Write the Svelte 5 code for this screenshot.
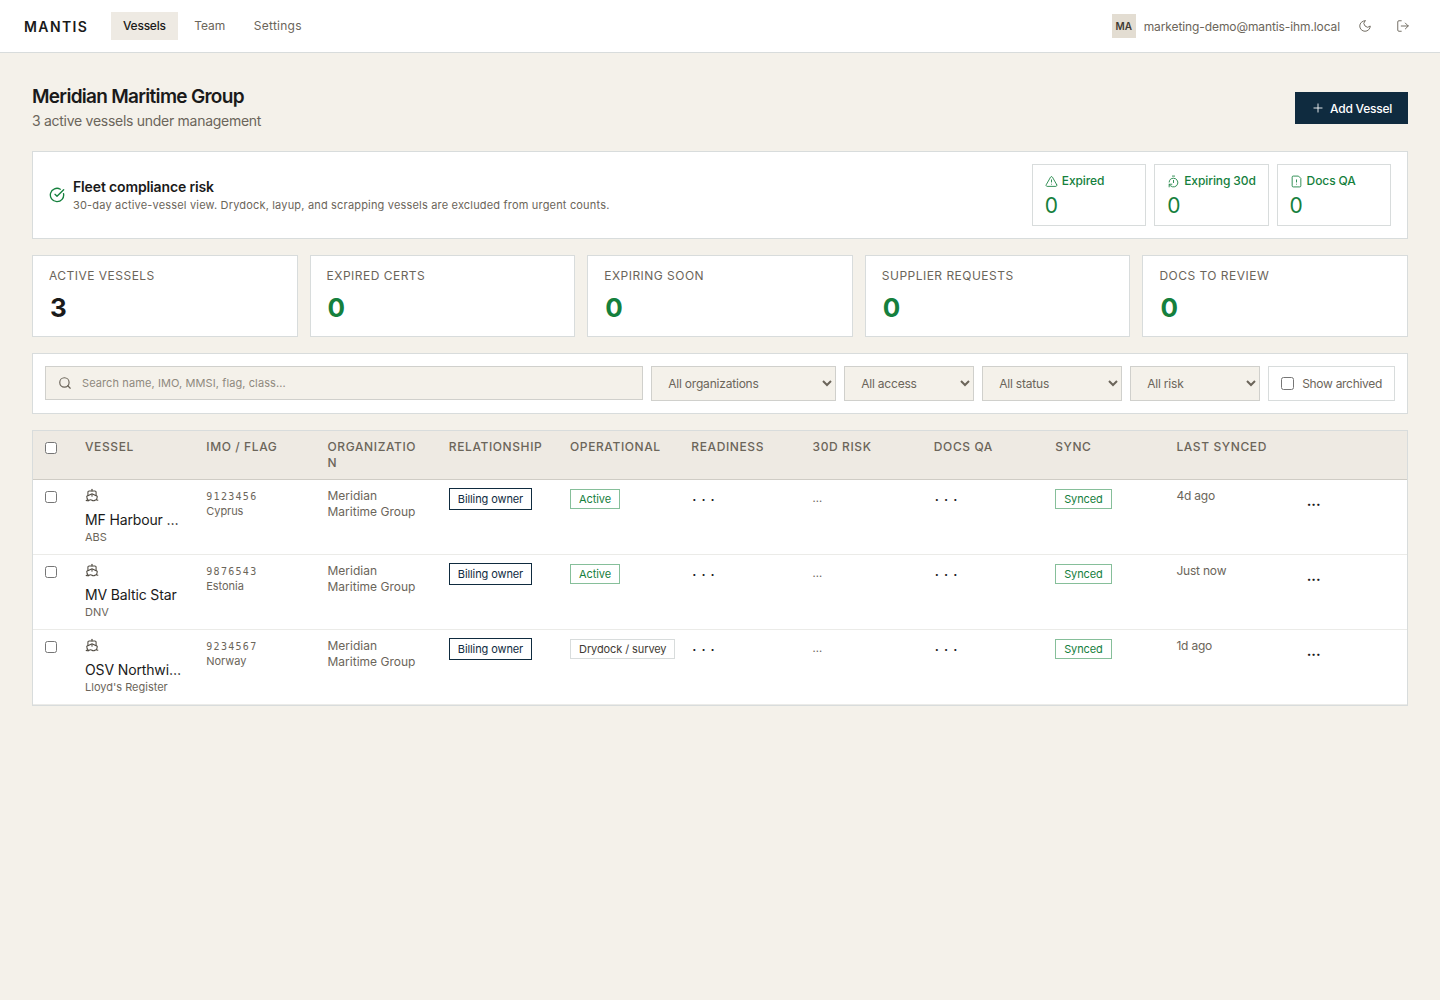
<script>
  const kpis = [
    { label: "Expired", icon: "alert" },
    { label: "Expiring 30d", icon: "timer" },
    { label: "Docs QA", icon: "file" },
  ];
  const stats = [
    { label: "ACTIVE VESSELS", value: 3, dark: true },
    { label: "EXPIRED CERTS", value: 0 },
    { label: "EXPIRING SOON", value: 0 },
    { label: "SUPPLIER REQUESTS", value: 0 },
    { label: "DOCS TO REVIEW", value: 0 },
  ];
  const columns = ["Vessel", "IMO / Flag", "Organization", "Relationship", "Operational", "Readiness", "30d Risk", "Docs QA", "Sync", "Last Synced", ""];
  const vessels = [
    { name: "MF Harbour Spirit", cls: "ABS", imo: "9123456", flag: "Cyprus", op: "Active", synced: "4d ago" },
    { name: "MV Baltic Star", cls: "DNV", imo: "9876543", flag: "Estonia", op: "Active", synced: "Just now" },
    { name: "OSV Northwind", cls: "Lloyd's Register", imo: "9234567", flag: "Norway", op: "Drydock / survey", synced: "1d ago" },
  ];
</script>

<header class="nav">
  <div class="logo">MANTIS</div>
  <nav class="links">
    <span class="link active">Vessels</span>
    <span class="link">Team</span>
    <span class="link">Settings</span>
  </nav>
  <div class="user">
    <span class="avatar">MA</span>
    <span class="email">marketing-demo@mantis-ihm.local</span>
    <svg class="ic moon" viewBox="0 0 24 24"><path d="M12 3a6 6 0 0 0 9 9 9 9 0 1 1-9-9Z" /></svg>
    <svg class="ic out" viewBox="0 0 24 24"><path d="m16 17 5-5-5-5" /><path d="M21 12H9" /><path d="M9 21H5a2 2 0 0 1-2-2V5a2 2 0 0 1 2-2h4" /></svg>
  </div>
</header>

<main class="page">
  <div class="head">
    <div>
      <h1>Meridian Maritime Group</h1>
      <p>3 active vessels under management</p>
    </div>
    <button class="add">
      <svg class="ic plus" viewBox="0 0 24 24"><path d="M5 12h14" /><path d="M12 5v14" /></svg>
      Add Vessel
    </button>
  </div>

  <section class="risk">
    <svg class="ic check" viewBox="0 0 24 24"><path d="M21.801 10A10 10 0 1 1 17 3.335" /><path d="m9 11 3 3L22 4" /></svg>
    <div class="risk-text">
      <div class="risk-title">Fleet compliance risk</div>
      <div class="risk-sub">30-day active-vessel view. Drydock, layup, and scrapping vessels are excluded from urgent counts.</div>
    </div>
    <div class="kpis">
      {#each kpis as k}
        <div class="kpi">
          <div class="kpi-label">
            <svg class="ic" viewBox="0 0 24 24">
              {#if k.icon === "alert"}
                <path d="m21.73 18-8-14a2 2 0 0 0-3.48 0l-8 14A2 2 0 0 0 4 21h16a2 2 0 0 0 1.73-3" /><path d="M12 9v4" /><path d="M12 17h.01" />
              {:else if k.icon === "timer"}
                <path d="M10 2h4" /><path d="M12 14v-4" /><path d="M4 13a8 8 0 0 1 8-7 8 8 0 1 1-5.3 14L4 17.6" /><path d="M9 17H4v5" />
              {:else}
                <path d="M15 2H6a2 2 0 0 0-2 2v16a2 2 0 0 0 2 2h12a2 2 0 0 0 2-2V7Z" /><path d="M12 9v4" /><path d="M12 17h.01" />
              {/if}
            </svg>
            {k.label}
          </div>
          <div class="kpi-value">0</div>
        </div>
      {/each}
    </div>
  </section>

  <section class="stats">
    {#each stats as s}
      <div class="stat">
        <div class="stat-label">{s.label}</div>
        <div class="stat-value" class:dark={s.dark}>{s.value}</div>
      </div>
    {/each}
  </section>

  <section class="filters">
    <div class="search">
      <svg class="ic" viewBox="0 0 24 24"><circle cx="11" cy="11" r="8" /><path d="m21 21-4.3-4.3" /></svg>
      <input placeholder="Search name, IMO, MMSI, flag, class..." />
    </div>
    <select class="org"><option>All organizations</option></select>
    <select class="access"><option>All access</option></select>
    <select class="status"><option>All status</option></select>
    <select class="riskf"><option>All risk</option></select>
    <label class="archived"><input type="checkbox" /> Show archived</label>
  </section>

  <section class="table-wrap">
    <table>
      <colgroup>
        <col class="col-check" />
      </colgroup>
      <thead>
        <tr>
          <th class="cb"><input type="checkbox" /></th>
          {#each columns as c}<th>{c}</th>{/each}
        </tr>
      </thead>
      <tbody>
        {#each vessels as v}
          <tr>
            <td class="cb"><input type="checkbox" /></td>
            <td>
              <svg class="ic ship" viewBox="0 0 24 24"><path d="M12 10.189V14" /><path d="M12 2v3" /><path d="M19 13V7a2 2 0 0 0-2-2H7a2 2 0 0 0-2 2v6" /><path d="M19.38 20A11.6 11.6 0 0 0 21 14l-8.188-3.639a2 2 0 0 0-1.624 0L3 14a11.6 11.6 0 0 0 2.81 7.76" /><path d="M2 21c.6.5 1.2 1 2.5 1 2.5 0 2.5-2 5-2 1.3 0 1.9.5 2.5 1s1.2 1 2.5 1c2.5 0 2.5-2 5-2 1.3 0 1.9.5 2.5 1" /></svg>
              <div class="v-name">{v.name}</div>
              <div class="v-cls">{v.cls}</div>
            </td>
            <td><div class="imo">{v.imo}</div><div class="flag">{v.flag}</div></td>
            <td class="org-cell">Meridian Maritime Group</td>
            <td><span class="tag owner">Billing owner</span></td>
            <td><span class="tag" class:green={v.op === "Active"} class:grey={v.op !== "Active"}>{v.op}</span></td>
            <td><span class="dots">...</span></td>
            <td><span class="mini">...</span></td>
            <td><span class="dots">...</span></td>
            <td><span class="tag green">Synced</span></td>
            <td class="last">{v.synced}</td>
            <td><span class="more">...</span></td>
          </tr>
        {/each}
      </tbody>
    </table>
  </section>
</main>

<style>
  :global(body) {
    background: #f4f1ea;
    font-family: Inter, "Liberation Sans", sans-serif;
    color: #1a1a1a;
  }
  .ic {
    width: 14px;
    height: 14px;
    fill: none;
    stroke: currentColor;
    stroke-width: 2;
    stroke-linecap: round;
    stroke-linejoin: round;
    flex: 0 0 auto;
  }
  .nav {
    display: flex;
    align-items: center;
    height: 52px;
    padding: 0 24px;
    background: #fff;
    border-bottom: 1px solid #d8dcdc;
  }
  .logo {
    font-size: 14px;
    font-weight: 600;
    letter-spacing: 0.1em;
    width: 87px;
  }
  .links {
    display: flex;
    gap: 4.5px;
  }
  .link {
    padding: 0 12px;
    height: 28px;
    line-height: 28px;
    font-size: 12px;
    color: #6b655a;
  }
  .link:last-child {
    letter-spacing: 0.02em;
  }
  .link.active {
    background: #eeeae3;
    color: #1a1a1a;
    font-weight: 500;
    letter-spacing: -0.02em;
  }
  .user {
    margin-left: auto;
    display: flex;
    align-items: center;
    padding-right: 6px;
    color: #6b655a;
    font-size: 12px;
  }
  .email {
    letter-spacing: -0.1px;
  }
  .avatar {
    width: 24px;
    height: 24px;
    background: #e3ddd2;
    font-size: 10px;
    font-weight: 600;
    color: #3f3b34;
    display: flex;
    align-items: center;
    justify-content: center;
    margin-right: 8px;
  }
  .moon {
    margin-left: 18px;
    stroke-width: 1.6;
  }
  .out {
    margin-left: 24px;
    stroke-width: 1.6;
  }
  .page {
    padding: 32px;
  }
  .head {
    display: flex;
    justify-content: space-between;
    align-items: flex-start;
    margin-bottom: 20px;
  }
  h1 {
    margin: 0;
    font-size: 19px;
    line-height: 24px;
    font-weight: 600;
    letter-spacing: -0.037em;
  }
  .head p {
    margin: 2px 0 0;
    font-size: 14px;
    line-height: 20px;
    letter-spacing: -0.28px;
    color: #6b655a;
  }
  .add {
    display: flex;
    align-items: center;
    gap: 5px;
    height: 32px;
    margin-top: 7px;
    padding: 0 16px;
    border: none;
    background: #0f2b3f;
    color: #fff;
    font: inherit;
    font-size: 12px;
    font-weight: 500;
    letter-spacing: -0.02em;
  }
  .plus {
    stroke-width: 1.5;
  }
  .risk {
    display: flex;
    align-items: center;
    gap: 8px;
    padding: 12px 16px;
    background: #fff;
    border: 1px solid #d8dcdc;
    margin-bottom: 16px;
  }
  .check {
    width: 16px;
    height: 16px;
    color: #15803d;
  }
  .risk-text {
    flex: 1;
  }
  .risk-title {
    font-size: 14px;
    line-height: 18px;
    font-weight: 600;
    letter-spacing: -0.01em;
  }
  .risk-sub {
    font-size: 11px;
    line-height: 16px;
    margin-top: 1px;
    letter-spacing: 0.18px;
    color: #6b655a;
  }
  .kpis {
    display: flex;
    gap: 8px;
  }
  .kpi {
    width: 114.4px;
    height: 62px;
    box-sizing: border-box;
    padding: 8px 12px;
    border: 1px solid #d8dcdc;
    color: #15803d;
  }
  .kpi-label {
    display: flex;
    align-items: center;
    gap: 4px;
    font-size: 12px;
    line-height: 16px;
    font-weight: 500;
    letter-spacing: -0.1px;
    white-space: nowrap;
  }
  .kpi-label .ic {
    width: 13px;
    height: 13px;
    stroke-width: 1.6;
  }
  .kpi-value {
    margin-top: 5px;
    font-size: 21px;
    line-height: 24px;
  }
  .stats {
    display: grid;
    grid-template-columns: repeat(5, 1fr);
    gap: 12px;
    margin-bottom: 16px;
  }
  .stat {
    height: 82px;
    box-sizing: border-box;
    padding: 12px 16px;
    background: #fff;
    border: 1px solid #d8dcdc;
  }
  .stat-label {
    font-size: 12px;
    line-height: 16px;
    letter-spacing: 0.04em;
    color: #6b655a;
  }
  .stat-value {
    margin-top: 8px;
    margin-left: 1px;
    font-size: 26px;
    line-height: 32px;
    font-weight: 700;
    color: #15803d;
  }
  .stat-value.dark {
    color: #1a1a1a;
  }
  .filters {
    display: flex;
    gap: 8px;
    align-items: flex-start;
    padding: 12px;
    background: #fff;
    border: 1px solid #d8dcdc;
    margin-bottom: 16px;
  }
  .search {
    flex: 1;
    display: flex;
    align-items: center;
    gap: 10px;
    height: 34px;
    box-sizing: border-box;
    padding: 0 12px;
    background: #f4f1ea;
    border: 1px solid #d0d0cc;
    color: #6b655a;
  }
  .search input {
    flex: 1;
    border: none;
    outline: none;
    background: transparent;
    font: inherit;
    font-size: 11px;
    letter-spacing: 0.1px;
    padding: 0;
  }
  .search input::placeholder {
    color: #8f897e;
  }
  select {
    height: 35px;
    box-sizing: border-box;
    padding: 0 0 0 12px;
    background: #f4f1ea;
    border: 1px solid #d0d0cc;
    border-radius: 0;
    font: inherit;
    font-size: 12px;
    letter-spacing: -0.2px;
    color: #6b655a;
  }
  .org { width: 185px; }
  .access { width: 130px; }
  .status { width: 140px; }
  .riskf { width: 130px; }
  .archived {
    display: flex;
    align-items: center;
    gap: 8px;
    height: 35px;
    box-sizing: border-box;
    padding: 0 12px;
    border: 1px solid #d8dcdc;
    font-size: 12px;
    letter-spacing: -0.3px;
    color: #6b655a;
    white-space: nowrap;
  }
  .archived input {
    margin: 0;
  }
  .table-wrap {
    background: #fff;
    border: 1px solid #d8dcdc;
  }
  table {
    width: 100%;
    table-layout: fixed;
    border-collapse: collapse;
  }
  .col-check {
    width: 40px;
  }
  th {
    padding: 8px 12px;
    height: 32px;
    background: #eeeae3;
    border-bottom: 1px solid #cfccc5;
    font-size: 12px;
    line-height: 16px;
    font-weight: 450;
    letter-spacing: 0.05em;
    text-transform: uppercase;
    text-align: left;
    vertical-align: top;
    color: #6b655a;
    overflow-wrap: anywhere;
  }
  td {
    height: 58px;
    padding: 8px 12px;
    border-bottom: 1px solid #ebebe8;
    vertical-align: top;
    font-size: 12px;
    line-height: 16px;
    color: #6b655a;
  }
  .cb {
    padding: 8px 0 0 12px;
  }
  .cb input {
    margin: 3px 0 0;
    width: 12px;
    height: 12px;
  }
  .ship {
    display: block;
    color: #4f4a41;
    stroke-width: 1.8;
  }
  .v-name {
    margin-top: 9px;
    font-size: 14px;
    line-height: 18px;
    letter-spacing: -0.01em;
    color: #1a1a1a;
    overflow: hidden;
    text-overflow: ellipsis;
    white-space: nowrap;
  }
  .v-cls {
    font-size: 11px;
    line-height: 15px;
    margin-top: 1px;
  }
  .imo {
    margin-top: 1px;
    font-family: "DejaVu Sans Mono", monospace;
    font-size: 10px;
    line-height: 15px;
    letter-spacing: 0.13em;
  }
  .flag {
    font-size: 11px;
    line-height: 15px;
    letter-spacing: -0.05px;
  }
  .last {
    letter-spacing: -0.2px;
  }
  .tag {
    display: block;
    width: fit-content;
    white-space: nowrap;
    padding: 2px 8px;
    font-size: 11px;
    line-height: 14px;
    letter-spacing: -0.1px;
    border: 1px solid #d8dcdc;
    margin-top: 1px;
  }
  .tag.owner {
    margin-top: 0;
    line-height: 16px;
    border-color: #0f2b3f;
    color: #0f2b3f;
  }
  .tag.green {
    border-color: #86bf9a;
    color: #15803d;
  }
  .tag.grey {
    color: #3f3b34;
  }
  .dots {
    color: #1a1a1a;
    letter-spacing: 5px;
    padding-left: 1px;
    font-size: 13px;
    font-weight: 600;
  }
  .mini {
    display: block;
    margin-top: 2px;
    font-size: 11px;
  }
  .more {
    display: block;
    margin: 5px 0 0 9px;
    color: #1a1a1a;
    font-size: 14px;
    font-weight: 700;
  }
</style>
